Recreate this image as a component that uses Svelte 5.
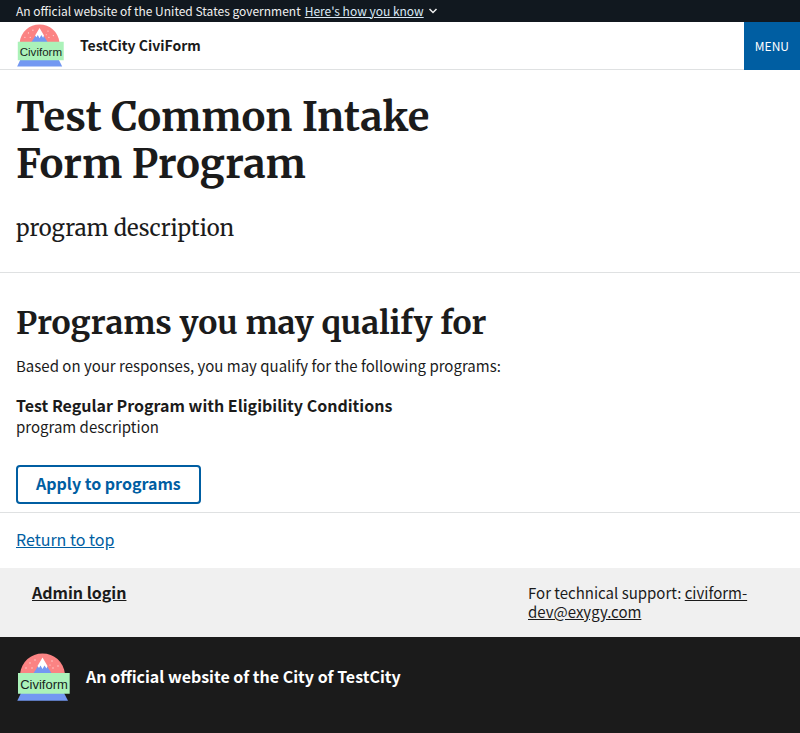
<script>
  const city = 'TestCity';
  const programs = [
    { title: 'Test Regular Program with Eligibility Conditions', description: 'program description' }
  ];
</script>

{#snippet logo()}
  <svg class="logo" viewBox="0 0 54 48" aria-hidden="true">
    <path d="M4 21C5.500 8.500 15 .5 26.500 .5S47.500 8.500 49 21z" fill="#fb8383" />
    <g fill="#ffdcdc">
      <circle cx="14" cy="10" r=".7" /><circle cx="19" cy="7" r=".7" /><circle cx="10" cy="15" r=".7" />
      <circle cx="16" cy="15" r=".7" /><circle cx="36" cy="8" r=".7" /><circle cx="42" cy="13" r=".7" />
      <circle cx="37" cy="15" r=".7" /><circle cx="34" cy="12" r=".6" />
    </g>
    <path d="M26.500 6 36 21H17z" fill="#7398f2" />
    <path d="M26.500 4.500 31.500 13 30.500 15.500 28.500 12.500 26.500 16 24.500 12.500 23 15 21.500 13z" fill="#fff" />
    <path d="M5 40h43l4 7.700H1.300z" fill="#7398f2" />
    <path d="M2 20h51.700v20.700H2z" fill="#abf2b9" />
    <text x="28" y="36" text-anchor="middle">Civiform</text>
  </svg>
{/snippet}

<div class="page" id="top">
  <section class="banner" aria-label="Official website of the United States government">
    <span>An official website of the United States government</span>
    <button type="button">Here's how you know</button>
    <svg viewBox="0 0 10 6" aria-hidden="true"><path d="m1.500 1 3.500 3.500L8.500 1" /></svg>
  </section>

  <header>
    <a class="brand" href="#home">{@render logo()}<strong>{city} CiviForm</strong></a>
    <button class="menu" type="button">MENU</button>
  </header>

  <main>
    <section class="intro">
      <h1>Test Common Intake Form Program</h1>
      <p>program description</p>
    </section>
    <section class="results">
      <h2>Programs you may qualify for</h2>
      <p>Based on your responses, you may qualify for the following programs:</p>
      {#each programs as program}
        <article>
          <h3>{program.title}</h3>
          <p>{program.description}</p>
        </article>
      {/each}
      <button class="apply" type="button">Apply to programs</button>
    </section>
  </main>

  <footer>
    <div class="return"><a href="#top">Return to top</a></div>
    <div class="links">
      <div class="admin"><a href="#login">Admin login</a></div>
      <div class="support">For technical support: <a href="mailto:civiform-dev@exygy.com">civiform-dev@exygy.com</a></div>
    </div>
    <div class="identifier">
      {@render logo()}
      <strong>An official website of the City of {city}</strong>
    </div>
  </footer>
</div>

<style>
  :global(body) { margin: 0; background: #fff; }
  .page {
    color: #1b1b1b;
    font: 15px/21px "Noto Sans CJK SC", sans-serif;
  }
  button { font: inherit; cursor: pointer; }
  h1, h2, h3, p { margin: 0; }
  .banner {
    display: flex;
    align-items: center;
    gap: 4px;
    height: 20px;
    padding: 0 16px 2px;
    background: #11181f;
    color: #f0f0f0;
    font-size: 12px;
  }
  .banner button {
    padding: 0;
    border: 0;
    background: none;
    color: #d9e8f6;
    text-decoration: underline;
  }
  .banner svg { width: 10px; padding-top: 2px; fill: none; stroke: #f0f0f0; stroke-width: 1.5; }
  header {
    display: flex;
    justify-content: space-between;
    height: 47px;
    border-bottom: 1px solid #dfe1e2;
  }
  .brand {
    display: flex;
    align-items: center;
    gap: 16px;
    padding-left: 16px;
    color: inherit;
    font-size: 14px;
    text-decoration: none;
  }
  .logo { flex: none; width: 54px; }
  .logo text { fill: #18251c; font: 13px "Liberation Sans", sans-serif; }
  .brand .logo { width: 48px; }
  .menu {
    height: 48px;
    padding: 0 11px 2px;
    border: 0;
    background: #005ea2;
    color: #fff;
    font-size: 12px;
  }
  .intro { padding: 24px 16px 29px; border-bottom: 1px solid #dfe1e2; }
  h1, h2, .intro p { font-family: Merriweather, "DejaVu Serif Condensed", "DejaVu Serif", serif; }
  .intro p { margin-top: 25px; font-size: 22px; line-height: 30px; }
  h1 { max-width: 480px; font-size: 40px; line-height: 47px; }
  .results { padding: 30px 16px 8px; border-bottom: 1px solid #dfe1e2; }
  h2 { margin-bottom: 12px; font-size: 32px; line-height: 40px; }
  article { margin: 19px 0 28px; }
  h3 { font-size: 16px; line-height: 21px; }
  .apply {
    display: block;
    height: 39px;
    padding: 0 18px 2px;
    border: 2px solid #005ea2;
    border-radius: 4px;
    background: none;
    color: #005ea2;
    font-size: 16px;
    font-weight: 700;
  }
  .return { padding: 16px 16px 18px; font-size: 16px; }
  .return a { color: #005ea2; }
  .links {
    display: flex;
    justify-content: space-between;
    padding: 15px 32px 16px;
    background: #f0f0f0;
    line-height: 19px;
  }
  .links a { color: inherit; }
  .admin { font-size: 16px; font-weight: 700; }
  .support { width: 240px; }
  .identifier {
    display: flex;
    align-items: flex-start;
    gap: 16px;
    padding: 16px 16px 32px;
    background: #1b1b1b;
    color: #fff;
    font-size: 16px;
  }
  .identifier strong { padding-top: 13px; }
</style>
